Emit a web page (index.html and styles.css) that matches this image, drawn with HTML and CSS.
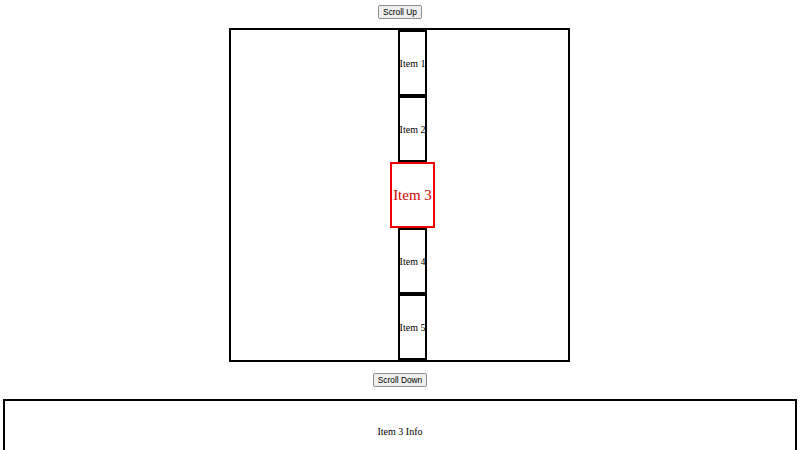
FILE: index.html
```html
<!DOCTYPE html>
<html>
<head>
<meta charset="utf-8">
<link rel="stylesheet" href="styles.css">
</head>
<body>
<div class="page">
  <button class="btn btn-up">Scroll Up</button>
  <div class="viewport">
    <div class="list">
      <div class="item">Item 1</div>
      <div class="item">Item 2</div>
      <div class="item active">Item 3</div>
      <div class="item">Item 4</div>
      <div class="item">Item 5</div>
    </div>
  </div>
  <button class="btn btn-down">Scroll Down</button>
</div>
<div class="info">Item 3 Info</div>
</body>
</html>
```
FILE: styles.css
```css
html, body {
  margin: 0;
  padding: 0;
  background: #fff;
}
body {
  font-family: "Liberation Serif", "Times New Roman", serif;
  font-size: 10px;
  color: #000;
  overflow: hidden;
}
.page {
  display: flex;
  flex-direction: column;
  align-items: center;
  padding-top: 5px;
}
.btn {
  font-family: "Liberation Sans", Arial, sans-serif;
  font-size: 8.33px;
  line-height: 10px;
  padding: 1px 4px;
  border: 1px solid #8f8f8f;
  border-radius: 2px;
  background: #efefef;
  color: #000;
  margin: 0;
}
.btn-up {
  margin-bottom: 9px;
}
.btn-down {
  margin-top: 11px;
}
.viewport {
  box-sizing: border-box;
  width: 341px;
  height: 334px;
  border: 2px solid #000;
  margin-left: -1px;
  overflow: hidden;
}
.list {
  display: flex;
  flex-direction: column;
  align-items: center;
  padding-left: 26px;
}
.item {
  box-sizing: border-box;
  height: 66px;
  border: 2px solid #000;
  display: flex;
  align-items: center;
  justify-content: center;
  font-size: 10px;
  white-space: nowrap;
}
.item.active {
  border-color: #e00;
  color: #d40000;
  font-size: 15px;
  padding: 0 1px;
}
.info {
  box-sizing: border-box;
  margin: 12px 3px 0 3px;
  border: 2px solid #000;
  padding: 25px 0 40px;
  text-align: center;
  font-size: 10px;
  line-height: 12px;
}
```
